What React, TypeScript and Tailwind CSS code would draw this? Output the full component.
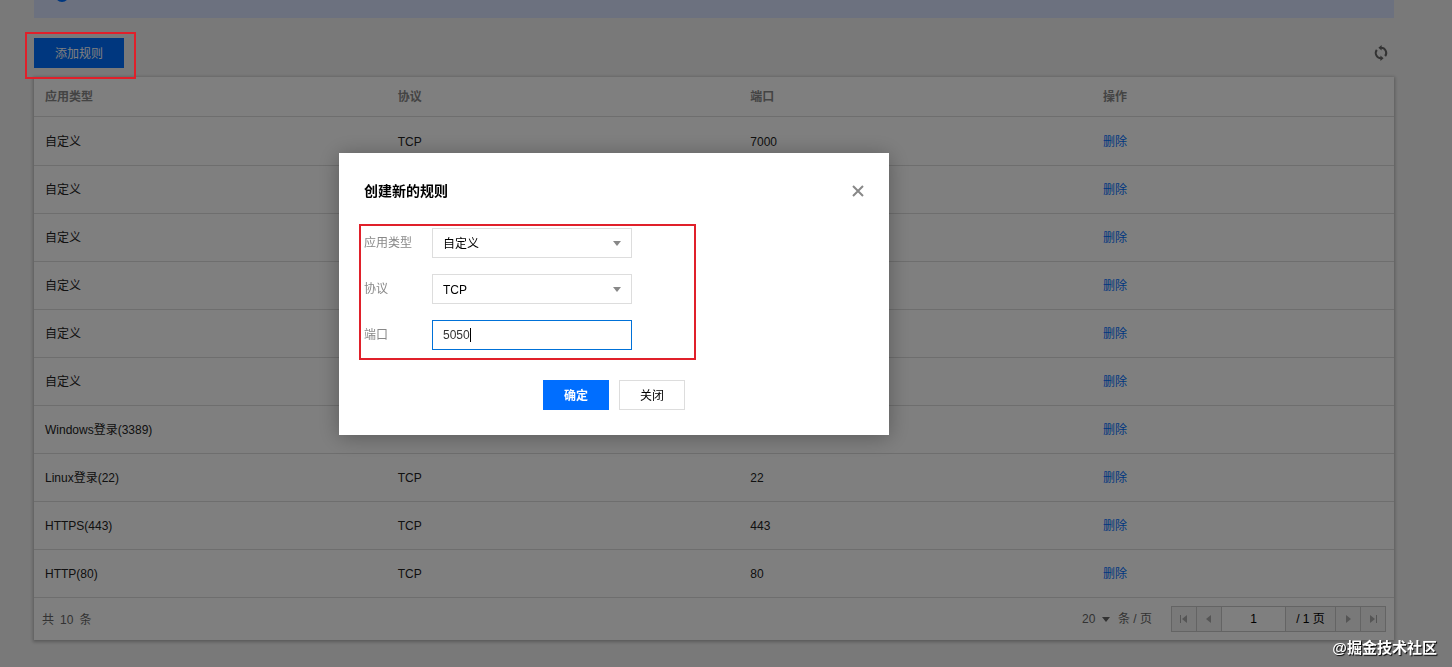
import { useState } from 'react';
import type { ReactNode } from 'react';

const rules = [
  { type: '自定义', protocol: 'TCP', port: '7000' },
  { type: '自定义' },
  { type: '自定义' },
  { type: '自定义' },
  { type: '自定义' },
  { type: '自定义' },
  { type: 'Windows登录(3389)' },
  { type: 'Linux登录(22)', protocol: 'TCP', port: '22' },
  { type: 'HTTPS(443)', protocol: 'TCP', port: '443' },
  { type: 'HTTP(80)', protocol: 'TCP', port: '80' },
];

function Caret({ className }: { className: string }) {
  return (
    <svg viewBox="0 0 8 5" className={`pointer-events-none h-[5px] w-2 ${className}`} fill="currentColor">
      <path d="M0 0h8L4 5z" />
    </svg>
  );
}

function RefreshIcon() {
  return (
    <svg viewBox="0 0 16 16" className="size-4" fill="none" stroke="currentColor" strokeWidth="2">
      <path d="M8 2.8a5.2 5.2 0 0 1 4.2 8.3M8 13.2A5.2 5.2 0 0 1 3.8 4.9" />
      <path d="M8.6 0v5.6L5.4 2.8zM7.4 16v-5.6l3.2 2.8z" fill="currentColor" stroke="none" />
    </svg>
  );
}

function PageButton({ label, path }: { label: string; path: string }) {
  return (
    <button aria-label={label} className="flex w-[25px] items-center justify-center border-r border-[#c8c8c8] text-[#aaa] last:w-6 last:border-r-0">
      <svg viewBox="0 0 8 8" className="size-2" fill="currentColor">
        <path d={path} />
      </svg>
    </button>
  );
}

function SelectField({ id, label, options }: { id: string; label: string; options: string[] }) {
  return (
    <Field id={id} label={label}>
      <select id={id} className="h-[30px] w-full appearance-none border border-[#ddd] bg-white px-2.5 pt-0.5 text-black outline-none">
        {options.map((option) => (
          <option key={option}>{option}</option>
        ))}
      </select>
      <Caret className="absolute top-[13px] right-[11px] text-[#888]" />
    </Field>
  );
}

function Field({ id, label, children }: { id: string; label: string; children: ReactNode }) {
  return (
    <div className="flex">
      <label htmlFor={id} className="w-[68px] pt-1.5 text-[#888]">{label}</label>
      <div className="relative w-[200px]">{children}</div>
    </div>
  );
}

function RuleDialog() {
  const [port, setPort] = useState('5050');

  return (
    <div className="fixed inset-0 z-10 bg-black/50">
      <div role="dialog" aria-labelledby="dialog-title" className="mt-[153px] ml-[339px] w-[550px] bg-white px-5 pt-7 pb-[25px] shadow-[0_2px_20px_rgba(0,0,0,0.3)]">
        <div className="flex items-center justify-between pr-1 pl-[5px]">
          <h2 id="dialog-title" className="text-sm font-bold text-black">创建新的规则</h2>
          <button aria-label="关闭窗口" className="p-[1px] text-[#888]">
            <svg viewBox="0 0 12 12" className="size-3" fill="none" stroke="currentColor" strokeWidth="2">
              <path d="M1 1l10 10M11 1L1 11" />
            </svg>
          </button>
        </div>

        <div className="mt-[23px] flex w-[337px] flex-col gap-4 border-2 border-[#e0202a] pt-0.5 pb-2 pl-[3px]">
          <SelectField id="app-type" label="应用类型" options={['自定义', 'HTTP(80)', 'HTTPS(443)']} />
          <SelectField id="protocol" label="协议" options={['TCP', 'UDP']} />
          <Field id="port" label="端口">
            <input
              id="port"
              value={port}
              onChange={(e) => setPort(e.target.value)}
              className="h-[30px] w-full border border-[#0071d8] px-2.5 text-[#333] outline-none"
            />
            <span className="absolute top-2 left-[38px] h-3.5 w-px bg-black" />
          </Field>
        </div>

        <div className="mt-5 flex justify-center gap-2.5">
          <button className="h-[30px] w-[66px] bg-[#006eff] pt-0.5 font-bold text-white">确定</button>
          <button className="h-[30px] w-[66px] border border-[#ddd] pt-0.5 text-black">关闭</button>
        </div>
      </div>
    </div>
  );
}

export default function App() {
  return (
    <div className="min-h-screen bg-[#f2f2f2] font-['Liberation_Sans','Noto_Sans_CJK_SC',sans-serif] text-xs leading-[18px]">
      <div className="mr-[58px] ml-[34px]">
        <div className="h-[18px] overflow-hidden bg-[#d8e2ff]">
          <div className="-mt-3 ml-[21px] size-[14px] rounded-full bg-[#006eff]" />
        </div>

        <div className="mt-5 flex items-center justify-between pb-[9px]">
          <div className="relative">
            <button className="h-[30px] w-[90px] bg-[#006eff] pt-0.5 text-white">添加规则</button>
            <div className="pointer-events-none absolute -top-1.5 -right-3 -bottom-[11px] -left-[9px] z-20 border-2 border-[#e0202a]" />
          </div>
          <button aria-label="刷新" className="mr-[5px] text-[#666]">
            <RefreshIcon />
          </button>
        </div>

        <div className="bg-white shadow-[0_1px_3px_1px_rgba(0,0,0,0.25)]">
          <table className="w-full table-fixed border-collapse text-left text-[#222]">
            <thead>
              <tr className="h-[39px] border-b border-[#ddd] text-[#888]">
                <th className="px-[11px] pt-0.5 font-bold">应用类型</th>
                <th className="px-[11px] pt-0.5 font-bold">协议</th>
                <th className="px-[11px] pt-0.5 font-bold">端口</th>
                <th className="w-[302px] px-[11px] pt-0.5 font-bold">操作</th>
              </tr>
            </thead>
            <tbody>
              {rules.map((rule, i) => (
                <tr key={i} className="h-12 border-b border-[#ddd] first:h-[49px]">
                  <td className="px-[11px] pt-0.5">{rule.type}</td>
                  <td className="px-[11px] pt-0.5">{rule.protocol}</td>
                  <td className="px-[11px] pt-0.5">{rule.port}</td>
                  <td className="px-[11px] pt-0.5">
                    <a href="#" className="text-[#006eff]">删除</a>
                  </td>
                </tr>
              ))}
            </tbody>
          </table>

          <div className="flex items-center justify-between p-2 text-[#666]">
            <p className="flex gap-1.5 pt-0.5">
              <span>共</span>
              <span>10</span>
              <span>条</span>
            </p>
            <div className="flex items-center">
              <div className="relative flex items-center">
                <select aria-label="每页条数" className="w-9 appearance-none outline-none">
                  <option>20</option>
                  <option>50</option>
                </select>
                <Caret className="absolute top-[7px] left-5 text-[#666]" />
              </div>
              <span>条 / 页</span>
              <div className="ml-[19px] flex h-[26px] border border-[#c8c8c8] bg-[#f2f2f2]">
                <PageButton label="首页" path="M0 0h1v8H0zM7 0v8L2 4z" />
                <PageButton label="上一页" path="M6 0v8L1 4z" />
                <input aria-label="页码" defaultValue="1" className="w-16 border-r border-[#c8c8c8] bg-white text-center text-black outline-none" />
                <span className="flex w-[50px] items-center justify-center border-r border-[#c8c8c8] text-black">/ 1 页</span>
                <PageButton label="下一页" path="M2 0v8L7 4z" />
                <PageButton label="末页" path="M1 0v8L6 4zM7 0h1v8H7z" />
              </div>
            </div>
          </div>
        </div>
      </div>

      <RuleDialog />
      <p className="fixed right-[15px] bottom-2.5 z-20 text-[15px] font-bold text-white [text-shadow:1px_1px_1px_#000]">@掘金技术社区</p>
    </div>
  );
}
